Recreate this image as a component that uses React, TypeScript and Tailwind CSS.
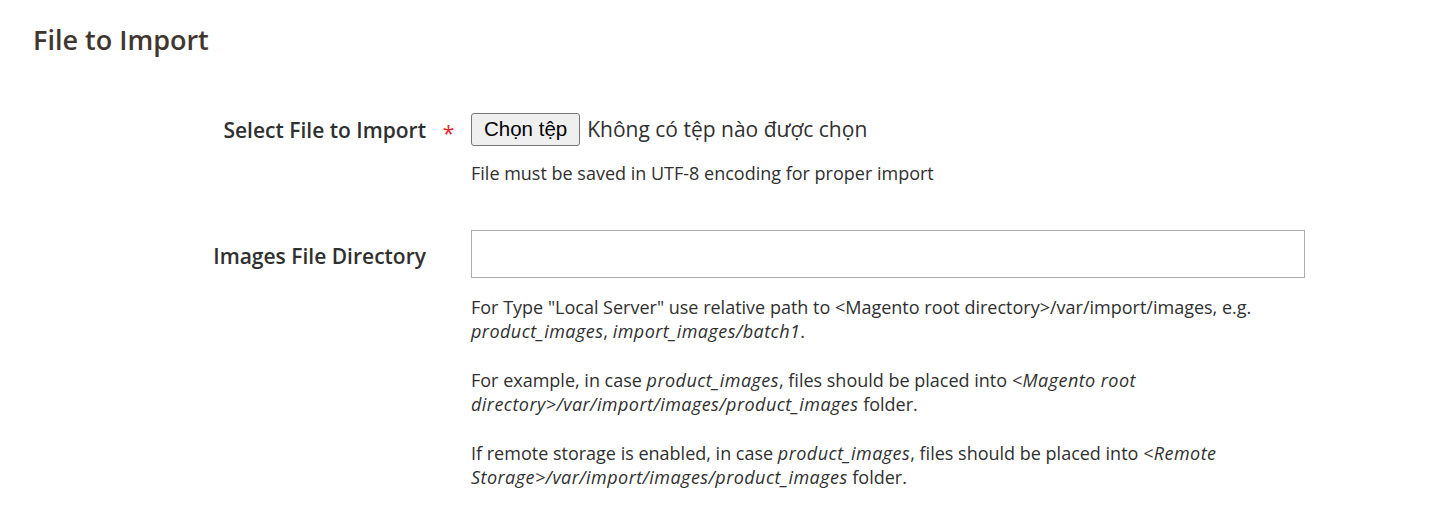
import React from "react";

const labelCls =
  "text-[21px] font-semibold text-[#303030] leading-[28px] text-right";
const noteCls = "text-[18px] text-[#303030] leading-[24px]";

// italic path fragments in the notes
const Em = ({ children }: { children: React.ReactNode }) => (
  <i className="tracking-[0.45px]">{children}</i>
);

const App = () => {
  return (
    <div
      className="w-[1452px] h-[530px] bg-white overflow-hidden pl-[33px] pt-[21px]"
      style={{ fontFamily: '"Open Sans", sans-serif' }}
    >
      <h2 className="text-[27px] font-semibold text-[#41362f] leading-[38px]">
        File to Import
      </h2>

      <div className="mt-[54px] flex flex-col gap-[45px]">
        {/* select file row */}
        <div className="flex">
          <div className="w-[393px] pt-[3px]">
            <p className={labelCls}>Select File to Import</p>
          </div>
          <div className="w-[45px] flex justify-center pt-[6px]">
            <span className="text-[21px] text-[#e22626] leading-[28px]">*</span>
          </div>
          <div className="flex flex-col">
            <div className="flex items-center gap-[7px] text-[21px] text-[#303030]">
              <button
                className="h-[33px] px-[12px] bg-[#efefef] border border-[#767676] rounded-[3px] text-black text-[20.5px]"
                style={{ fontFamily: '"Liberation Sans", Arial, sans-serif' }}
              >
                Chọn tệp
              </button>
              <span>Không có tệp nào được chọn</span>
            </div>
            <p className={`${noteCls} mt-[15px]`}>
              File must be saved in UTF-8 encoding for proper import
            </p>
          </div>
        </div>

        {/* images dir row */}
        <div className="flex">
          <div className="w-[393px] pt-[12px]">
            <p className={labelCls}>Images File Directory</p>
          </div>
          <div className="w-[45px]" />
          <div className="flex flex-col w-[834px]">
            <input
              type="text"
              className="h-[48px] w-full border border-[#adadad] bg-white px-3 outline-none"
            />
            <div className={`${noteCls} mt-[17px] flex flex-col gap-[25px]`}>
              <p>
                For Type "Local Server" use relative path to &lt;Magento root
                directory&gt;/var/import/images, e.g.{" "}
                <Em>product_images</Em>, <Em>import_images/batch1</Em>.
              </p>
              <p>
                For example, in case <Em>product_images</Em>, files should be
                placed into{" "}
                <Em>&lt;Magento root directory&gt;/var/import/images/product_images</Em>{" "}
                folder.
              </p>
              <p>
                If remote storage is enabled, in case <Em>product_images</Em>,
                files should be placed into{" "}
                <Em>&lt;Remote Storage&gt;/var/import/images/product_images</Em>{" "}
                folder.
              </p>
            </div>
          </div>
        </div>
      </div>
    </div>
  );
};

export default App;
